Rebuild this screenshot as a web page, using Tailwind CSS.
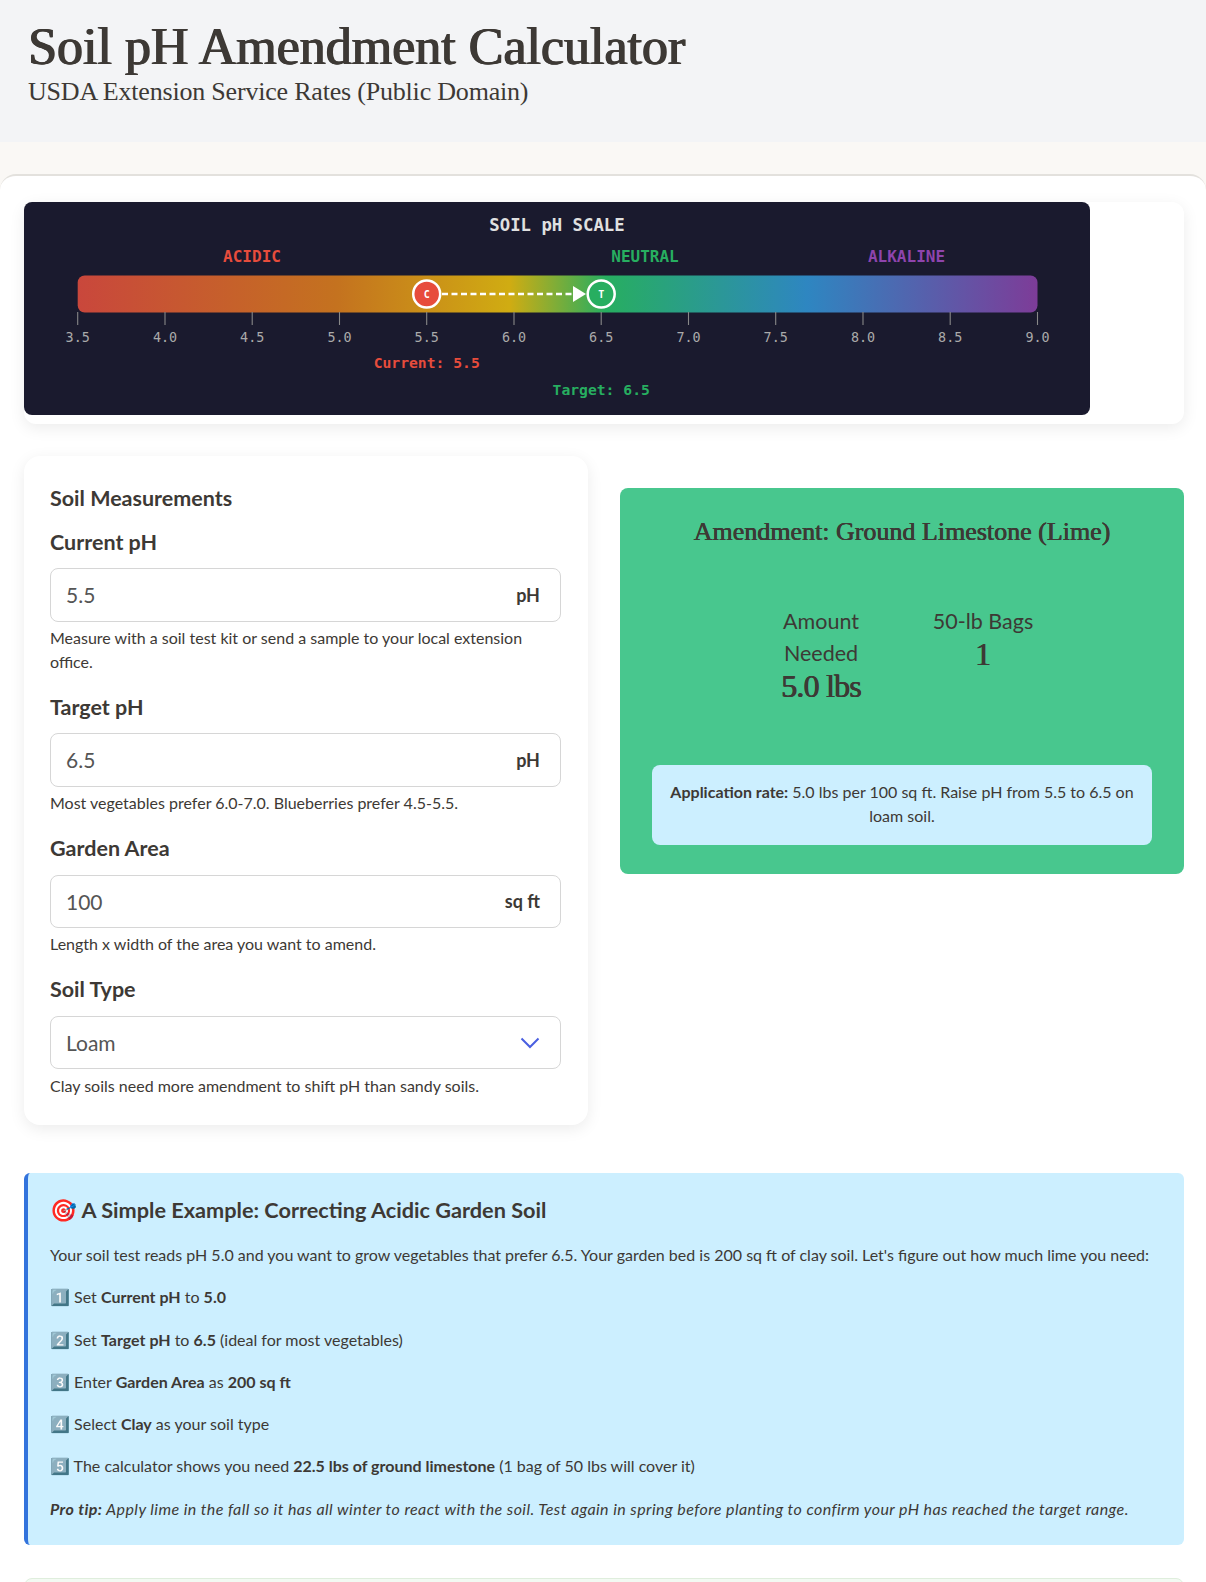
<!DOCTYPE html>
<html lang="en">
<head>
    <meta charset="UTF-8">
    <meta name="viewport" content="width=device-width, initial-scale=1.0">
    <title>Soil pH Amendment Calculator</title>
    <script src="https://cdn.jsdelivr.net/npm/@tailwindcss/browser@4"></script>
</head>
<body class="h-[1582px] overflow-hidden bg-[#faf8f5] font-['Lato',sans-serif] text-[#3d3935]">
    <header class="h-[142px] bg-[#f3f4f6] px-7 pt-[18px]">
        <h1 class="font-['Liberation_Serif',serif] text-[52px] leading-[58px] font-normal [text-shadow:0.9px_0_0_#3d3935,-0.6px_0_0_#3d3935]">Soil pH Amendment Calculator</h1>
        <p class="font-['Liberation_Serif',serif] text-[26px] leading-[32px] tracking-[-0.2px]">USDA Extension Service Rates (Public Domain)</p>
    </header>

    <main class="mt-8 rounded-t-2xl border-t-2 border-[#e3e1dd] bg-white pt-[26px] pr-[22px] pl-6">
        <!-- pH scale -->
        <section class="h-[222px] rounded-xl bg-white shadow-[0_4px_16px_rgba(0,0,0,0.08)]">
            <svg width="1066" height="213" viewBox="0 0 1066 213" class="rounded-lg bg-[#1a1a2e] font-['DejaVu_Sans_Mono',monospace]">
                <defs>
                    <linearGradient id="ph-grad" x1="0" x2="1" y1="0" y2="0">
                        <stop offset="0" stop-color="#c9473c"/>
                        <stop offset="0.27" stop-color="#c4721f"/>
                        <stop offset="0.45" stop-color="#d0ac12"/>
                        <stop offset="0.55" stop-color="#27ae60"/>
                        <stop offset="0.76" stop-color="#2e86c1"/>
                        <stop offset="1" stop-color="#7d3c98"/>
                    </linearGradient>
                </defs>
                <text x="533" y="29" text-anchor="middle" fill="#e0e0e0" font-size="17.3" font-weight="700">SOIL pH SCALE</text>
                <text x="228" y="60" text-anchor="middle" fill="#e74c3c" font-size="16" font-weight="700">ACIDIC</text>
                <text x="621" y="60" text-anchor="middle" fill="#27ae60" font-size="16" font-weight="700">NEUTRAL</text>
                <text x="882.5" y="60" text-anchor="middle" fill="#8e44ad" font-size="16" font-weight="700">ALKALINE</text>
                <rect x="53.7" y="73.5" width="959.8" height="37" rx="7" fill="url(#ph-grad)"/>
                <g stroke="#888" stroke-width="1.1">
                    <path d="M53.7 110v13M141 110v13M228.2 110v13M315.5 110v13M402.7 110v13M490 110v13M577.2 110v13M664.5 110v13M751.7 110v13M839 110v13M926.2 110v13M1013.5 110v13"/>
                </g>
                <g fill="#aaa" font-size="13.4" text-anchor="middle">
                    <text x="53.7" y="140">3.5</text>
                    <text x="141" y="140">4.0</text>
                    <text x="228.2" y="140">4.5</text>
                    <text x="315.5" y="140">5.0</text>
                    <text x="402.7" y="140">5.5</text>
                    <text x="490" y="140">6.0</text>
                    <text x="577.2" y="140">6.5</text>
                    <text x="664.5" y="140">7.0</text>
                    <text x="751.7" y="140">7.5</text>
                    <text x="839" y="140">8.0</text>
                    <text x="926.2" y="140">8.5</text>
                    <text x="1013.5" y="140">9.0</text>
                </g>
                <line x1="418" y1="92" x2="550" y2="92" stroke="#fff" stroke-width="2.6" stroke-dasharray="6 3.5"/>
                <path d="M549 84 L562 92 L549 100 Z" fill="#fff"/>
                <circle cx="402.7" cy="92" r="13.5" fill="#e74c3c" stroke="#fff" stroke-width="2.5"/>
                <text x="402.7" y="96" text-anchor="middle" fill="#fff" font-size="10" font-weight="700">C</text>
                <circle cx="577.2" cy="92" r="13.5" fill="#27ae60" stroke="#fff" stroke-width="2.5"/>
                <text x="577.2" y="96" text-anchor="middle" fill="#fff" font-size="10" font-weight="700">T</text>
                <text x="402.7" y="166" text-anchor="middle" fill="#e74c3c" font-size="14.7" font-weight="700">Current: 5.5</text>
                <text x="577.2" y="193" text-anchor="middle" fill="#27ae60" font-size="14.7" font-weight="700">Target: 6.5</text>
            </svg>
        </section>

        <div class="mt-8 grid grid-cols-2 items-start gap-8">
            <!-- form -->
            <section class="h-[669px] rounded-2xl bg-white pt-[28px] pr-[27px] pl-[26px] shadow-[0_4px_16px_rgba(0,0,0,0.08)]">
                <h2 class="text-[21.5px] leading-[28px] font-bold">Soil Measurements</h2>
                <label class="mt-[16px] block text-[21.5px] leading-[28px] font-bold">Current pH</label>
                <div class="mt-[12px] flex h-[54px] items-center rounded-lg border border-[#d6d6d6] pr-5 pl-[15px]">
                    <input value="5.5" class="w-full text-[21px] text-[#555] outline-none">
                    <span class="text-[18px] font-bold">pH</span>
                </div>
                <p class="mt-[4px] text-[16px] leading-[24px]">Measure with a soil test kit or send a sample to your local extension office.</p>
                <label class="mt-[19px] block text-[21.5px] leading-[28px] font-bold">Target pH</label>
                <div class="mt-[12px] flex h-[54px] items-center rounded-lg border border-[#d6d6d6] pr-5 pl-[15px]">
                    <input value="6.5" class="w-full text-[21px] text-[#555] outline-none">
                    <span class="text-[18px] font-bold">pH</span>
                </div>
                <p class="mt-[4px] text-[16px] leading-[24px]">Most vegetables prefer 6.0-7.0. Blueberries prefer 4.5-5.5.</p>
                <label class="mt-[19px] block text-[21.5px] leading-[28px] font-bold">Garden Area</label>
                <div class="mt-[13px] flex h-[53px] items-center rounded-lg border border-[#d6d6d6] pr-5 pl-[15px]">
                    <input value="100" class="w-full text-[21px] text-[#555] outline-none">
                    <span class="shrink-0 text-[18px] font-bold">sq ft</span>
                </div>
                <p class="mt-[4px] text-[16px] leading-[24px]">Length x width of the area you want to amend.</p>
                <label class="mt-[19px] block text-[21.5px] leading-[28px] font-bold">Soil Type</label>
                <div class="mt-[13px] flex h-[53px] items-center rounded-lg border border-[#d6d6d6] pr-5 pl-[15px]">
                    <select class="w-full appearance-none bg-white text-[21px] text-[#555] outline-none">
                        <option>Loam</option>
                        <option>Clay</option>
                        <option>Sand</option>
                    </select>
                    <svg width="20" height="12" viewBox="0 0 20 12" fill="none" stroke="#4a5fe0" stroke-width="2" class="shrink-0"><path d="M1.5 1.5 L10 10 L18.5 1.5"/></svg>
                </div>
                <p class="mt-[5px] text-[16px] leading-[24px]">Clay soils need more amendment to shift pH than sandy soils.</p>
            </section>

            <!-- result -->
            <section class="mt-8 h-[386px] rounded-lg bg-[#48c78e] px-8 pt-[26px]">
                <h2 class="text-center font-['Liberation_Serif',serif] text-[26px] leading-[36px] font-normal [text-shadow:0.4px_0_0_#3d3935,-0.2px_0_0_#3d3935]">Amendment: Ground Limestone (Lime)</h2>
                <div class="mt-[55px] flex justify-center gap-[52px]">
                    <div class="w-[110px] text-center">
                        <p class="text-[21.5px] leading-[32px]">Amount Needed</p>
                        <p class="mt-px font-['Liberation_Serif',serif] text-[32px] leading-[32px] font-normal tracking-[-0.8px] [text-shadow:0.5px_0_0_#3d3935,-0.3px_0_0_#3d3935]">5.0 lbs</p>
                    </div>
                    <div class="w-[110px] text-center">
                        <p class="text-[21.5px] leading-[32px]">50-lb Bags</p>
                        <p class="mt-px font-['Liberation_Serif',serif] text-[32px] leading-[32px] font-normal [text-shadow:0.5px_0_0_#3d3935,-0.3px_0_0_#3d3935]">1</p>
                    </div>
                </div>
                <div class="mt-[63px] rounded-lg bg-[#ccefff] px-4 pt-[15px] pb-[17px] text-center text-[16px] leading-[24px]">
                    <strong>Application rate:</strong> 5.0 lbs per 100 sq ft. Raise pH from 5.5 to 6.5 on loam soil.
                </div>
            </section>
        </div>

        <!-- example -->
        <section class="mt-[48px] h-[372px] rounded-md border-l-4 border-[#3273dc] bg-[#ccefff] pt-[22px] pl-[22px] text-[16px] leading-[24px]">
            <h3 class="text-[21.7px] leading-[30px] font-bold">🎯 A Simple Example: Correcting Acidic Garden Soil</h3>
            <p class="mt-[18px]">Your soil test reads pH 5.0 and you want to grow vegetables that prefer 6.5. Your garden bed is 200 sq ft of clay soil. Let's figure out how much lime you need:</p>
            <p class="mt-[18.3px]">1️⃣ Set <strong>Current pH</strong> to <strong>5.0</strong></p>
            <p class="mt-[18.3px]">2️⃣ Set <strong>Target pH</strong> to <strong>6.5</strong> (ideal for most vegetables)</p>
            <p class="mt-[18.3px]">3️⃣ Enter <strong>Garden Area</strong> as <strong>200 sq ft</strong></p>
            <p class="mt-[18.3px]">4️⃣ Select <strong>Clay</strong> as your soil type</p>
            <p class="mt-[18.3px]">5️⃣ The calculator shows you need <strong>22.5 lbs of ground limestone</strong> (1 bag of 50 lbs will cover it)</p>
            <p class="mt-[18.3px] tracking-[0.42px] italic"><strong>Pro tip:</strong> Apply lime in the fall so it has all winter to react with the soil. Test again in spring before planting to confirm your pH has reached the target range.</p>
        </section>

        <section class="mt-[33px] h-[60px] rounded-lg border border-[#dfeedd] bg-[#f3faf3]"></section>
    </main>
</body>
</html>
